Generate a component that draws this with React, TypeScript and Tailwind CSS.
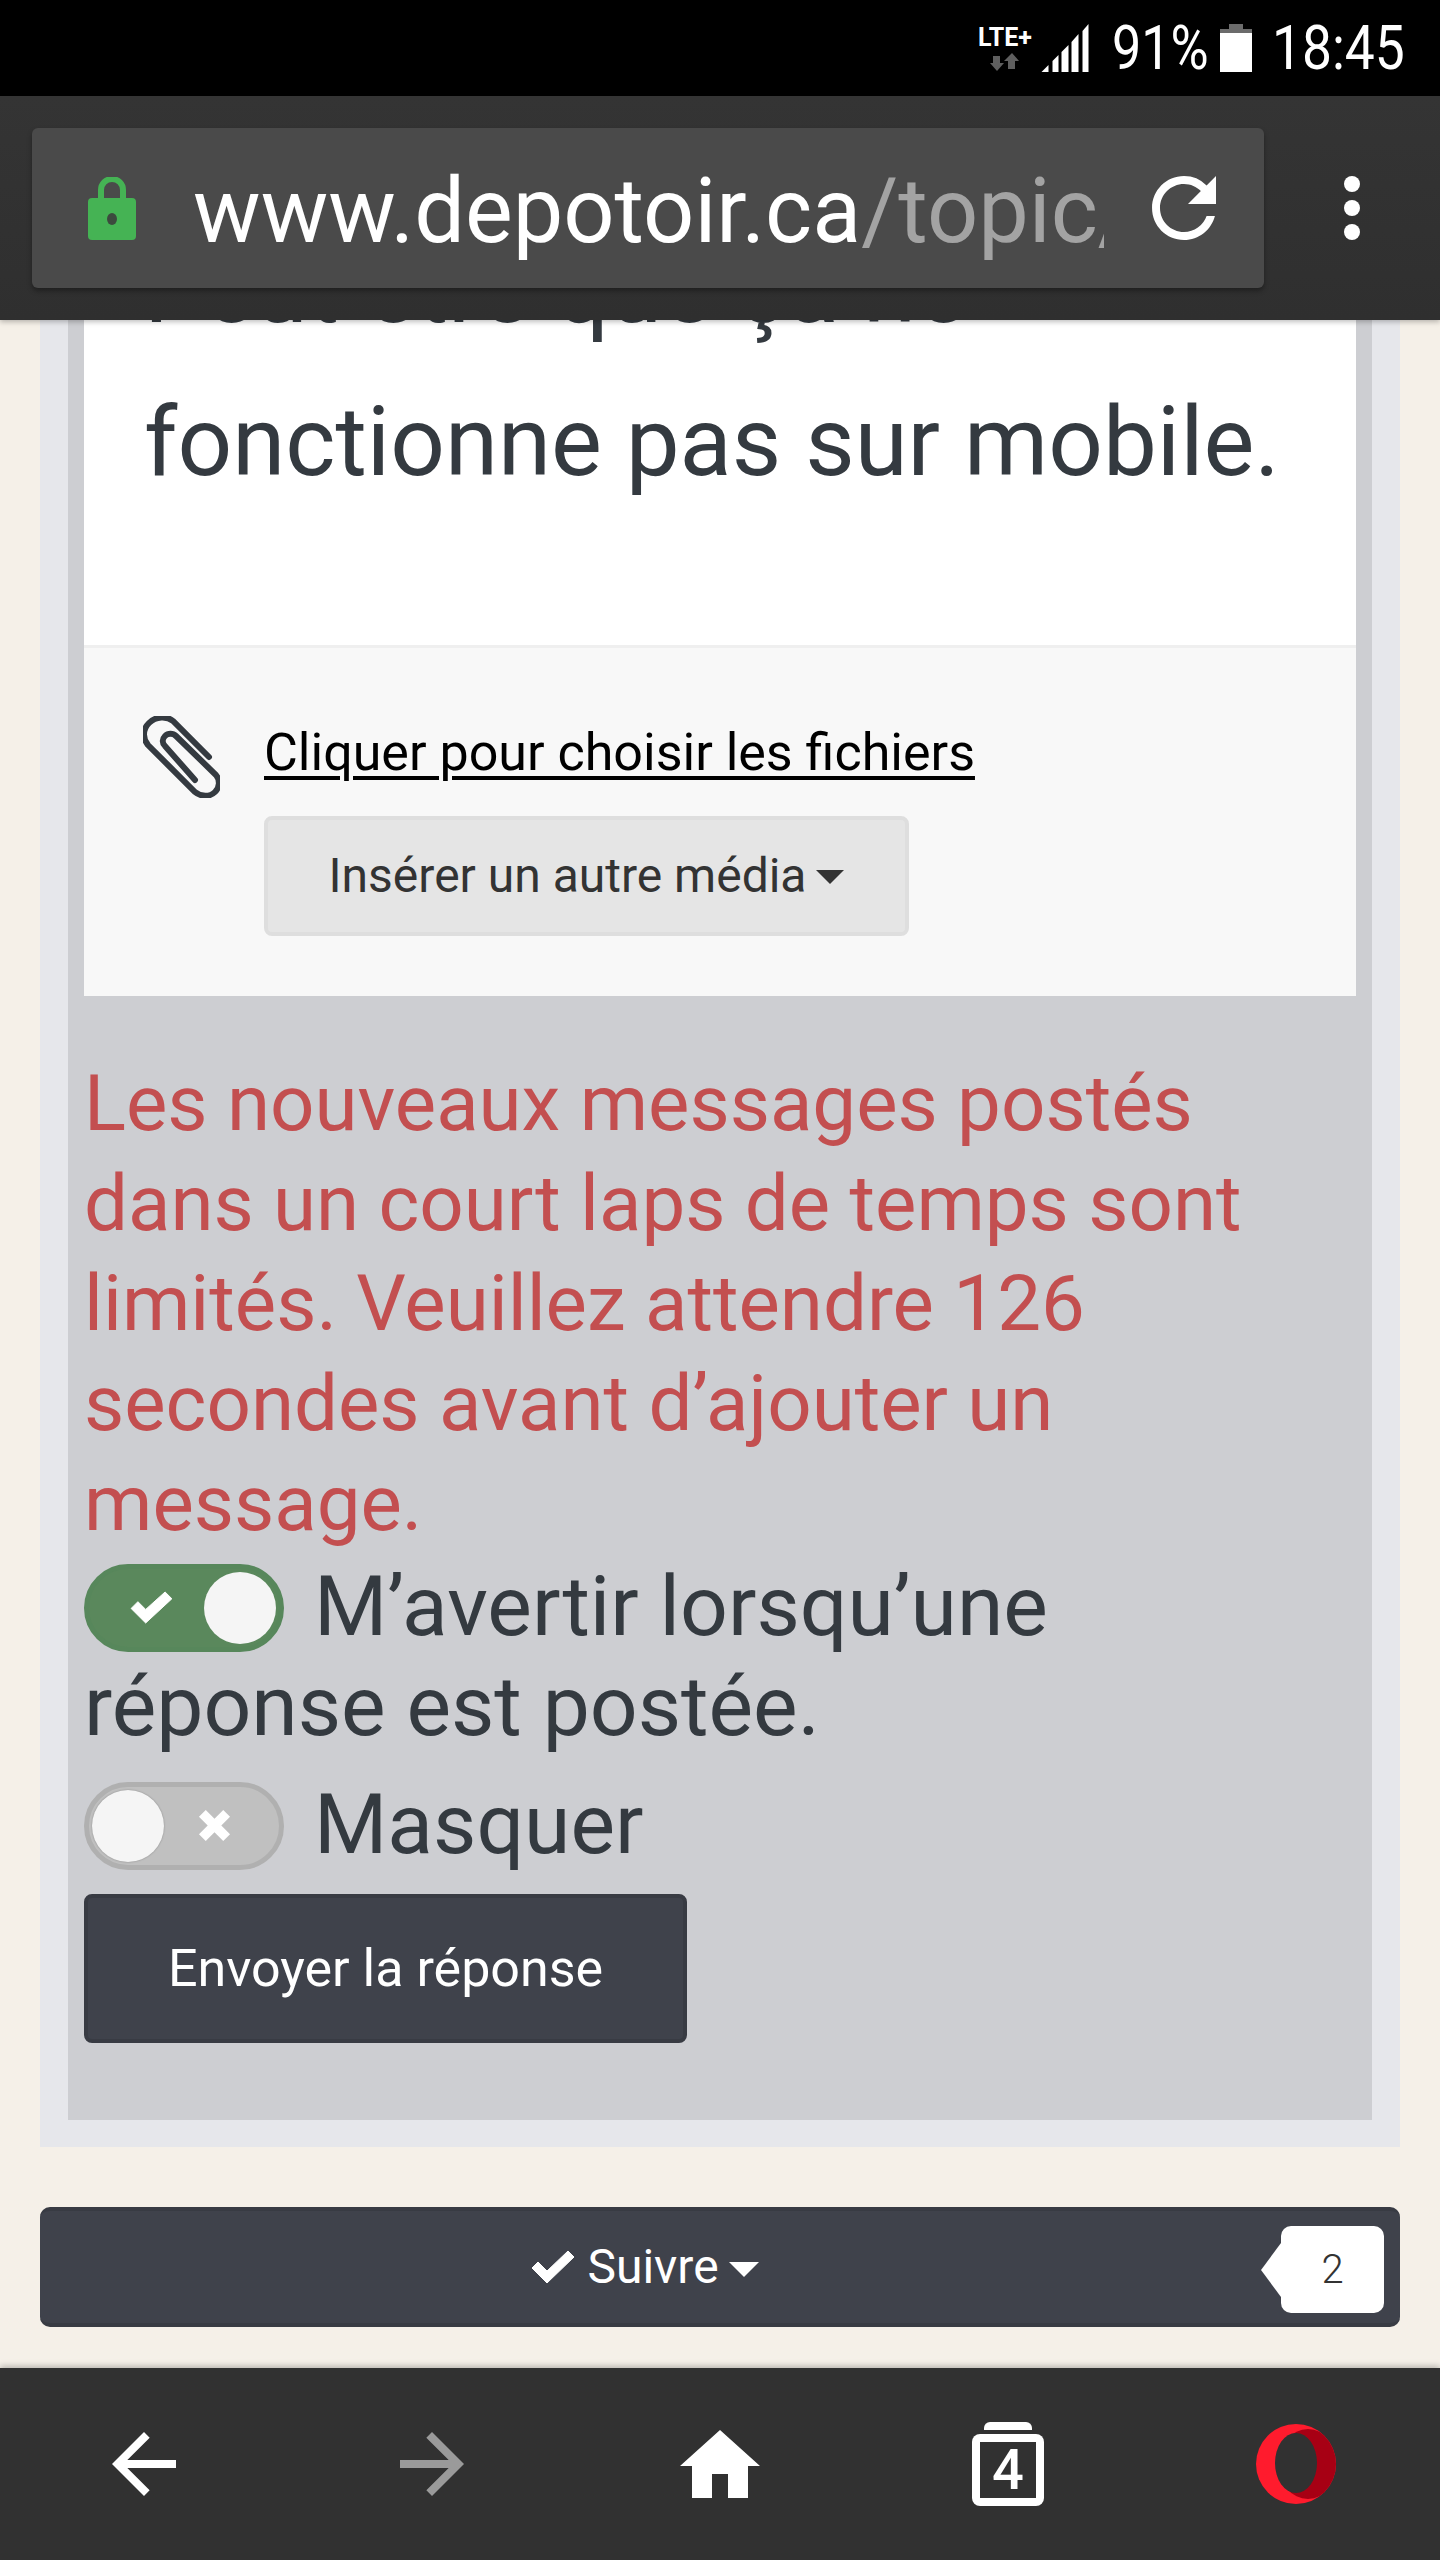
const fontRoboto = "font-['Roboto',sans-serif]";

function SignalIcon() {
  return (
    <svg width="49" height="48" viewBox="0 0 48 48" fill="#fff" aria-hidden>
      <path d="M0 48 7 41V48Z" />
      <path d="M11 37 17 31V48H11Z" />
      <path d="M20 28 27 21V48H20Z" />
      <path d="M30 18 37 10V48H30Z" />
      <path d="M41 7 47 0V48H41Z" />
    </svg>
  );
}

function StatusBar() {
  return (
    <div className="flex h-[96px] shrink-0 items-center justify-end bg-black pr-[40px] text-white">
      <div className="flex h-[48px] w-[60px] flex-col items-center">
        <span className="mt-[1px] whitespace-nowrap text-[25px] leading-[26px] font-bold">LTE+</span>
        <svg className="mt-[2px]" width="30" height="18" viewBox="0 0 30 18" fill="#5f5f5f" aria-hidden>
          <path d="M3 3h7v7h4L7 18 0 10h3z" />
          <path d="M22 0l7 8h-4v8h-7V8h-4z" />
        </svg>
      </div>
      <div className="ml-[6px]">
        <SignalIcon />
      </div>
      <span className="ml-[22px] w-[94px] origin-left scale-x-[0.84] whitespace-nowrap text-[62px] leading-none">91%</span>
      <svg className="ml-[14px]" width="32" height="48" viewBox="0 0 32 48" aria-hidden>
        <path d="M9 0h14v5h9v4H0V5h9z" fill="#6b6b6b" />
        <rect y="9" width="32" height="39" fill="#fff" />
      </svg>
      <span className="ml-[20px] w-[128px] origin-left scale-x-[0.86] whitespace-nowrap text-[62px] leading-none">18:45</span>
    </div>
  );
}

function Toolbar() {
  return (
    <div className="relative z-10 flex h-[224px] shrink-0 items-center bg-linear-to-b from-[#343434] to-[#2f2f2f] pl-[32px] shadow-[0_2px_5px_rgba(0,0,0,0.25)]">
      <div className="flex h-[160px] w-[1232px] items-center rounded-[6px] bg-[#4a4a4a] pl-[56px] shadow-[0_3px_5px_rgba(0,0,0,0.35)]">
        <svg className="mr-[57px] shrink-0" width="48" height="63" viewBox="0 0 48 63" aria-hidden>
          <path d="M13 24V13a11 11 0 0 1 22 0v11" fill="none" stroke="#45b354" strokeWidth="6" />
          <path d="M4 21h40a4 4 0 0 1 4 4v34a4 4 0 0 1-4 4H4a4 4 0 0 1-4-4V25a4 4 0 0 1 4-4z" fill="#45b354" />
          <ellipse cx="24" cy="42" rx="5" ry="6" fill="#3c4a3e" />
        </svg>
        <div className="mt-[8px] w-[911px] shrink-0 overflow-hidden whitespace-nowrap text-[90px] leading-[110px] text-white">
          www.depotoir.ca<span className="text-[#a3a3a3]">/topic/</span>
        </div>
        <svg className="ml-[48px] shrink-0" width="64" height="64" viewBox="4 4 16 16" fill="#fff" aria-hidden>
          <path d="M17.65 6.35A7.958 7.958 0 0 0 12 4c-4.42 0-7.99 3.58-7.99 8s3.57 8 7.99 8c3.73 0 6.84-2.55 7.73-6h-2.08A5.99 5.99 0 0 1 12 18c-3.31 0-6-2.69-6-6s2.69-6 6-6c1.66 0 3.14.69 4.22 1.78L13 11h7V4l-2.35 2.35z" />
        </svg>
      </div>
      <div className="ml-[80px] flex flex-col gap-[8px]">
        <span className="size-[16px] rounded-full bg-white" />
        <span className="size-[16px] rounded-full bg-white" />
        <span className="size-[16px] rounded-full bg-white" />
      </div>
    </div>
  );
}

function Toggle({ on }: { on: boolean }) {
  return (
    <span
      className={`mr-[30px] mt-[-10px] inline-flex h-[88px] w-[200px] shrink-0 items-center rounded-full border-[5px] px-[3px] align-middle ${
        on ? "justify-end border-[#57875b] bg-[#5a885c]" : "justify-start border-[#b0b0b0] bg-[#c0c0c0]"
      }`}
    >
      {on ? (
        <>
          <svg className="mr-[31px]" width="43" height="33" viewBox="0 0 44 34" fill="#fff" aria-hidden>
            <path d="M16 33 1 18l7-7 8 8L36 1l7 7z" strokeLinejoin="round" stroke="#fff" strokeWidth="1" />
          </svg>
          <span className="size-[72px] rounded-full bg-[#f5f5f5]" />
        </>
      ) : (
        <>
          <span className="size-[72px] rounded-full bg-[#f5f5f5] shadow-[0_0_2px_rgba(0,0,0,0.3)]" />
          <svg className="ml-[34px]" width="33" height="33" viewBox="0 0 34 34" fill="#fff" aria-hidden>
            <path d="M8 1l9 9 9-9 7 7-9 9 9 9-7 7-9-9-9 9-7-7 9-9-9-9z" />
          </svg>
        </>
      )}
    </span>
  );
}

function PostForm() {
  return (
    <section className="mx-[40px] bg-[#e6e7eb] px-[28px] pb-[27px]">
      <div className="border-x-[16px] border-[#cdced2] bg-[#cdced2] pb-[77px]">
        <div className="bg-white pl-[60px] pb-[126px] text-[96px] leading-[153px] text-[#343a40]">
          <p className="whitespace-nowrap">Peut-être que ça ne</p>
          <p className="whitespace-nowrap">fonctionne pas sur mobile.</p>
        </div>
        <div className="flex border-t-[3px] border-[#efefef] bg-[#f8f8f8] pl-[59px] pt-[73px] pb-[60px]">
          <svg className="mr-[44px] mt-[-5px] shrink-0" width="77" height="82" viewBox="0 0 77 82" fill="none" stroke="#343a40" strokeWidth="6" strokeLinecap="round" aria-hidden>
            <path d="M66 41 30 5C24 0 13 0 6 7S0 23 5 29l47 47c6 5 15 5 20 0s5-12 1-17L33 20c-3-3-8-3-11 0s-3 7 0 10l30 34" />
          </svg>
          <div className="flex flex-col items-start">
            <a className="text-[52px] leading-[64px] text-black underline decoration-[4px] underline-offset-[6px]">
              Cliquer pour choisir les fichiers
            </a>
            <button className="mt-[31px] flex h-[120px] w-[645px] items-center justify-center rounded-[8px] border-[4px] border-[#dedede] bg-[#e5e5e5] text-[48px] text-[#333]">
              Insérer un autre média
              <span className="ml-[10px] mt-[2px] border-x-[14px] border-t-[14px] border-x-transparent border-t-[#333]" />
            </button>
          </div>
        </div>
        <div className="pt-[58px] text-[84px] leading-[100px] text-[#343a40]">
          <p className="text-[78px] text-[#c34f50]">
            Les nouveaux messages postés dans un court laps de temps sont limités. Veuillez attendre 126 secondes avant d’ajouter un message.
          </p>
          <div className="mt-[3px]">
            <Toggle on />
            M’avertir lorsqu’une réponse est postée.
          </div>
          <div className="mt-[18px]">
            <Toggle on={false} />
            Masquer
          </div>
        </div>
        <button className="mt-[19px] flex h-[149px] w-[603px] items-center justify-center rounded-[8px] border-[4px] border-[#383b43] bg-[#3f424b] text-[52px] text-white">
          Envoyer la réponse
        </button>
      </div>
    </section>
  );
}

function FollowBar() {
  return (
    <div className="relative mx-[40px] mt-[60px] flex h-[120px] items-center justify-center rounded-[10px] border-y-[4px] border-[#383b43] bg-[#3f424b] pr-[150px] text-[48px] text-white">
      <svg className="mr-[12px]" width="44" height="36" viewBox="0 0 44 34" fill="#fff" aria-hidden>
        <path d="M16 33 1 18l6-6 9 9L37 1l6 6z" strokeLinejoin="round" stroke="#fff" />
      </svg>
      Suivre
      <span className="ml-[10px] mt-[4px] border-x-[15px] border-t-[15px] border-x-transparent border-t-white" />
      <div className="absolute right-[16px] top-[15px] flex h-[87px] w-[103px] items-center justify-center rounded-[10px] bg-white text-[40px] font-light text-[#333]">
        <span className="absolute left-[-20px] top-[17px] border-y-[27px] border-r-[20px] border-y-transparent border-r-white" />
        2
      </div>
    </div>
  );
}

function BottomNav() {
  return (
    <div className="relative z-10 flex h-[192px] shrink-0 items-center bg-[#313131] pl-[112px] shadow-[0_-2px_6px_rgba(0,0,0,0.25)]">
      <svg width="64" height="64" viewBox="4 4 16 16" fill="#fff" aria-hidden>
        <path d="M20 11H7.83l5.59-5.59L12 4l-8 8 8 8 1.41-1.41L7.83 13H20v-2z" />
      </svg>
      <svg className="ml-[224px]" width="64" height="64" viewBox="4 4 16 16" fill="#9a9a9a" aria-hidden>
        <path d="M4 11h12.17l-5.59-5.59L12 4l8 8-8 8-1.41-1.41L16.17 13H4v-2z" />
      </svg>
      <svg className="ml-[216px]" width="80" height="68" viewBox="2 3 20 17" fill="#fff" aria-hidden>
        <path d="M10 20v-6h4v6h5v-8h3L12 3 2 12h3v8z" />
      </svg>
      <div className="ml-[212px] flex flex-col items-center">
        <span className="mb-[4px] h-[8px] w-[48px] rounded-t-[6px] bg-white" />
        <div className="relative flex size-[72px] items-center justify-center rounded-[8px] bg-white">
          <div className="flex size-[56px] items-center justify-center bg-[#313131] text-[56px] leading-none font-medium text-white">
            4
          </div>
        </div>
      </div>
      <svg className="ml-[212px]" width="80" height="80" viewBox="0 0 80 80" aria-hidden>
        <defs>
          <clipPath id="opera-clip">
            <circle cx="40" cy="40" r="40" />
          </clipPath>
        </defs>
        <circle cx="40" cy="40" r="40" fill="#ff1b2d" />
        <ellipse cx="52" cy="40" rx="30" ry="35" fill="#a70014" clipPath="url(#opera-clip)" />
        <ellipse cx="40" cy="39" rx="21" ry="30" fill="#313131" />
      </svg>
    </div>
  );
}

export default function App() {
  return (
    <div className={`flex h-[2560px] w-[1440px] flex-col overflow-hidden bg-[#f5f0e8] ${fontRoboto}`}>
      <StatusBar />
      <Toolbar />
      <main className="min-h-0 flex-1 overflow-hidden">
        <div className="mt-[-107px]">
          <PostForm />
          <FollowBar />
        </div>
      </main>
      <BottomNav />
    </div>
  );
}
